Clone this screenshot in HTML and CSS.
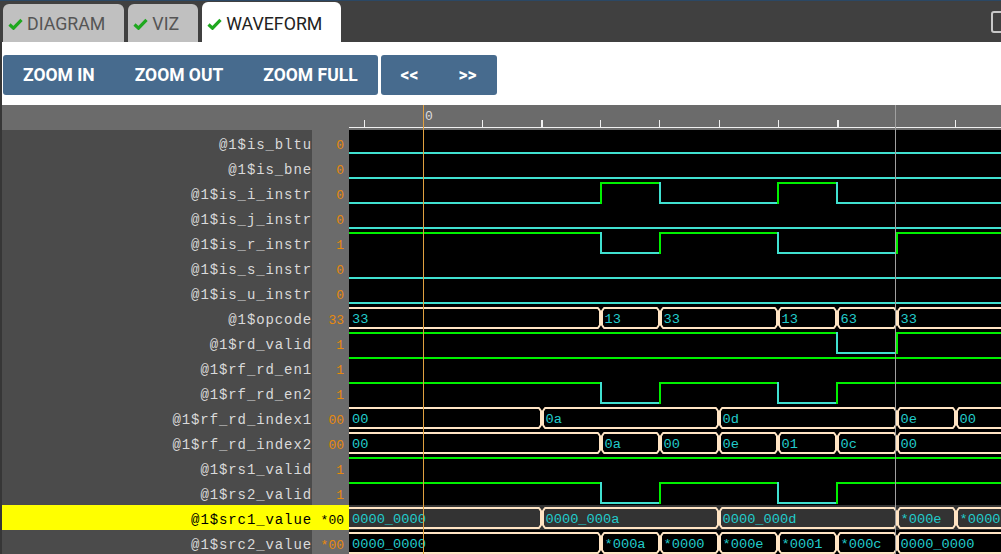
FILE: index.html
```html
<!DOCTYPE html>
<html>
<head>
<meta charset="utf-8">
<title>Waveform</title>
<link rel="stylesheet" href="styles.css">
</head>
<body>
<header class="topbar">
  <div class="tab"><svg class="check" viewBox="0 0 15 12" width="15" height="12"><path d="M1.5 6.5 L5.5 10.2 L13.5 1.8"/></svg><span>DIAGRAM</span></div>
  <div class="tab"><svg class="check" viewBox="0 0 15 12" width="15" height="12"><path d="M1.5 6.5 L5.5 10.2 L13.5 1.8"/></svg><span>VIZ</span></div>
  <div class="tab active"><svg class="check" viewBox="0 0 15 12" width="15" height="12"><path d="M1.5 6.5 L5.5 10.2 L13.5 1.8"/></svg><span>WAVEFORM</span></div>
  <span class="winbtn"></span>
</header>
<div class="main">
  <div class="toolbar">
    <div class="btngroup">
      <span class="btn">ZOOM IN</span>
      <span class="btn">ZOOM OUT</span>
      <span class="btn">ZOOM FULL</span>
    </div>
    <div class="btngroup">
      <span class="btn">&lt;&lt;</span>
      <span class="btn">&gt;&gt;</span>
    </div>
  </div>
  <div class="viewer">
    <div class="ruler-row">
      <div class="ruler-spacer"></div>
      <svg class="ruler" id="ruler" width="652" height="25" viewBox="0 0 652 25">
        <rect x="0" y="22" width="652" height="1" class="rl"/>
        <rect x="15" y="15" width="1" height="7" class="rl"/>
        <rect x="133" y="15" width="1" height="7" class="rl"/>
        <rect x="192" y="15" width="2" height="7" class="rl"/>
        <rect x="251" y="15" width="1" height="7" class="rl"/>
        <rect x="310" y="15" width="1" height="7" class="rl"/>
        <rect x="370" y="15" width="1" height="7" class="rl"/>
        <rect x="429" y="15" width="1" height="7" class="rl"/>
        <rect x="488" y="15" width="2" height="7" class="rl"/>
        <rect x="546" y="15" width="1" height="7" class="rl"/>
        <rect x="606" y="15" width="1" height="7" class="rl"/>
        <text x="76" y="15" class="ruler-text">0</text>
        <rect x="74" y="0" width="1" height="25" class="cursor"/>
        <rect x="546" y="0" width="1" height="25" class="marker"/>
      </svg>
    </div>
    <div class="rows">
      <div class="labels">
        <div class="name">@1$is_bltu</div><div class="val">0</div>
        <div class="name">@1$is_bne</div><div class="val">0</div>
        <div class="name">@1$is_i_instr</div><div class="val">0</div>
        <div class="name">@1$is_j_instr</div><div class="val">0</div>
        <div class="name">@1$is_r_instr</div><div class="val">1</div>
        <div class="name">@1$is_s_instr</div><div class="val">0</div>
        <div class="name">@1$is_u_instr</div><div class="val">0</div>
        <div class="name">@1$opcode</div><div class="val">33</div>
        <div class="name">@1$rd_valid</div><div class="val">1</div>
        <div class="name">@1$rf_rd_en1</div><div class="val">1</div>
        <div class="name">@1$rf_rd_en2</div><div class="val">1</div>
        <div class="name">@1$rf_rd_index1</div><div class="val">00</div>
        <div class="name">@1$rf_rd_index2</div><div class="val">00</div>
        <div class="name">@1$rs1_valid</div><div class="val">1</div>
        <div class="name">@1$rs2_valid</div><div class="val">1</div>
        <div class="name hl">@1$src1_value</div><div class="val hl">*00</div>
        <div class="name">@1$src2_value</div><div class="val">*00</div>
      </div>
      <svg class="waves" id="waves" width="652" height="425" viewBox="0 0 652 425"></svg>
    </div>
  </div>
</div>
<script src="script.js"></script>
</body>
</html>
```
FILE: styles.css
```css
* { box-sizing: border-box; }
html, body { margin: 0; padding: 0; }
body {
  width: 1001px;
  height: 554px;
  overflow: hidden;
  background: #404040;
  font-family: Roboto, "Liberation Sans", sans-serif;
}
.topbar {
  height: 42px;
  border-top: 1px solid #2b4865;
  background: #404040;
  display: flex;
  align-items: flex-end;
  gap: 4px;
  padding-left: 3px;
  overflow: hidden;
}
.tab {
  display: flex;
  align-items: center;
  gap: 4px;
  height: 38px;
  padding: 1px 19px 0 5px;
  background: #c0c0c0;
  color: #555555;
  border-radius: 6px 6px 0 0;
  font-size: 17.8px;
  line-height: 1;
}
.tab.active {
  height: 40px;
  padding-top: 3px;
  background: #ffffff;
  color: #222222;
}
.check path {
  fill: none;
  stroke: #1fa81f;
  stroke-width: 3.2;
}
.winbtn {
  align-self: flex-start;
  margin-top: 10px;
  margin-left: auto;
  margin-right: -14px;
  flex: none;
  width: 24px;
  height: 22px;
  border: 2px solid #c8c8c8;
  border-radius: 3px;
}
.main {
  border-left: 2px solid #363636;
}
.toolbar {
  height: 63px;
  background: #ffffff;
  display: flex;
  gap: 3px;
  padding: 13px 0 0 1px;
}
.btngroup {
  display: flex;
  height: 40px;
  background: #476b8e;
  border-radius: 3px;
}
.btn {
  display: flex;
  align-items: center;
  padding: 0 20px;
  color: #ffffff;
  font-weight: 700;
  font-size: 17.5px;
}
.ruler-row {
  display: flex;
  height: 25px;
  background: #6b6b6b;
}
.ruler-spacer { width: 347px; flex: none; }
.ruler { display: block; flex: none; }
.rl { fill: #f0f0f0; }
.cursor { fill: #e0a040; }
.marker { fill: #a0a0a0; }
.ruler-text {
  font: 13px "Liberation Mono", monospace;
  fill: #dddddd;
}
.rows { display: flex; }
.labels {
  width: 347px;
  flex: none;
  display: grid;
  grid-template-columns: 310px 37px;
  grid-auto-rows: 25px;
}
.name {
  background: #4b4b4b;
  color: #dadada;
  font: 14px "Liberation Mono", monospace;
  letter-spacing: 0.9px;
  line-height: 25px;
  padding-top: 3px;
  overflow: hidden;
  text-align: right;
  white-space: nowrap;
}
.val {
  background: #6b6b6b;
  color: #e8890c;
  font: 13px "Liberation Mono", monospace;
  line-height: 25px;
  padding-top: 3px;
  overflow: hidden;
  text-align: right;
  padding-right: 5px;
}
.name.hl, .val.hl {
  background: #ffff00;
  color: #000000;
}
.waves { display: block; flex: none; background: #000000; }
.bus-text {
  font: 13.7px "Liberation Mono", monospace;
  fill: #22cccc;
}
```
FILE: script.js
```js
(function () {
  var NS = 'http://www.w3.org/2000/svg';
  var svg = document.getElementById('waves');
  var OFF = 349;
  var GREEN = '#00f000', CYAN = '#40e0d0', BUS = '#ffe4c4';
  function gx(k) { return Math.round(364.6 + 59.1 * k); }
  function el(tag, attrs, text) {
    var e = document.createElementNS(NS, tag);
    for (var a in attrs) e.setAttribute(a, attrs[a]);
    if (text != null) e.textContent = text;
    svg.appendChild(e);
    return e;
  }
  var rows = [
    { t: 'bit', v: 0, e: [] },
    { t: 'bit', v: 0, e: [] },
    { t: 'bit', v: 0, e: [4, 5, 7, 8] },
    { t: 'bit', v: 0, e: [] },
    { t: 'bit', v: 1, e: [4, 5, 7, 9] },
    { t: 'bit', v: 0, e: [] },
    { t: 'bit', v: 0, e: [] },
    { t: 'bus', s: [[-1, '33'], [4, '13'], [5, '33'], [7, '13'], [8, '63'], [9, '33']] },
    { t: 'bit', v: 1, e: [8, 9] },
    { t: 'bit', v: 1, e: [] },
    { t: 'bit', v: 1, e: [4, 5, 7, 8] },
    { t: 'bus', s: [[-1, '00'], [3, '0a'], [6, '0d'], [9, '0e'], [10, '00']] },
    { t: 'bus', s: [[-1, '00'], [4, '0a'], [5, '00'], [6, '0e'], [7, '01'], [8, '0c'], [9, '00']] },
    { t: 'bit', v: 1, e: [] },
    { t: 'bit', v: 1, e: [4, 5, 7, 8] },
    { t: 'bus', hl: true, s: [[-1, '0000_0000'], [3, '0000_000a'], [6, '0000_000d'], [9, '*000e'], [10, '*0000']] },
    { t: 'bus', s: [[-1, '0000_0000'], [4, '*000a'], [5, '*0000'], [6, '*000e'], [7, '*0001'], [8, '*000c'], [9, '0000_0000']] }
  ];
  rows.forEach(function (r, i) {
    var y0 = 25 * i;
    if (r.hl) el('rect', { x: 0, y: y0, width: 652, height: 25, fill: '#333333' });
    if (r.t === 'bit') {
      var lvl = r.v, x0 = -5;
      var ks = r.e.concat([null]);
      ks.forEach(function (k) {
        var x = (k === null) ? 660 : gx(k) - OFF;
        var y = y0 + (lvl ? 3 : 23);
        el('line', { x1: x0, y1: y, x2: x, y2: y, stroke: lvl ? GREEN : CYAN, 'stroke-width': 2 });
        if (k !== null) {
          var nl = 1 - lvl;
          var ny = y0 + (nl ? 3 : 23);
          el('line', { x1: x, y1: y, x2: x, y2: ny, stroke: nl ? GREEN : CYAN, 'stroke-width': 2, 'stroke-linecap': 'square' });
          lvl = nl;
          x0 = x;
        }
      });
    } else {
      var segs = r.s;
      segs.forEach(function (s, j) {
        var ks = s[0];
        var ke = (j + 1 < segs.length) ? segs[j + 1][0] : null;
        var xs = ks < 0 ? -10 : gx(ks) - OFF + 1;
        var xe = ke === null ? 700 : gx(ke) - OFF - 1;
        var T = y0 + 3, B = y0 + 23;
        var pts = [[xs + 2, T], [xe - 2, T], [xe, T + 3], [xe, B - 3], [xe - 2, B], [xs + 2, B], [xs, B - 3], [xs, T + 3]];
        el('polygon', {
          points: pts.map(function (p) { return p.join(','); }).join(' '),
          fill: 'none', stroke: BUS, 'stroke-width': 2, 'stroke-linejoin': 'round'
        });
        el('text', { x: ks < 0 ? 3 : xs + 2.5, y: y0 + 18, 'class': 'bus-text' }, s[1]);
      });
    }
  });
  el('rect', { x: 423 - OFF, y: 0, width: 1, height: 425, fill: '#e0a040' });
  el('rect', { x: 895 - OFF, y: 0, width: 1, height: 425, fill: '#a0a0a0' });
})();
```
